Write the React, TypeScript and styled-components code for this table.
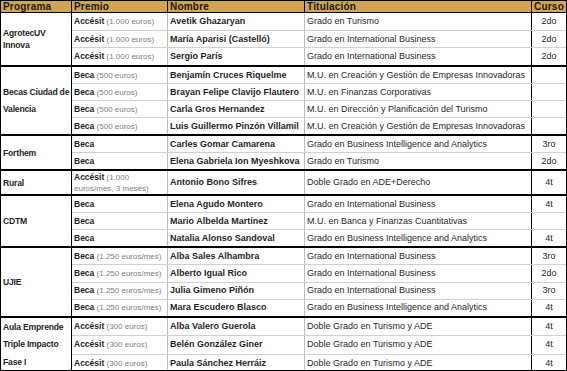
import React from 'react';
import styled, { createGlobalStyle } from 'styled-components';

const GlobalStyle = createGlobalStyle`
  html, body {
    margin: 0;
    padding: 0;
    background: #ffffff;
  }
  body {
    font-family: 'Liberation Sans', Arial, sans-serif;
    color: #1f1f1f;
  }
`;

const Table = styled.div`
  width: 567px;
  height: 371px;
  box-sizing: border-box;
  border: 1px solid #000;
  display: flex;
  flex-direction: column;
  overflow: hidden;
`;

const HeaderRow = styled.div`
  display: grid;
  grid-template-columns: 71px 96px 137px 227px 1fr;
  height: 12px;
  flex: none;
  background: #d3a352;
  border-bottom: 1px solid #000;
  box-sizing: border-box;
`;

const HeaderCell = styled.div<{ $center?: boolean; $last?: boolean }>`
  display: flex;
  align-items: center;
  justify-content: ${({ $center }) => ($center ? 'center' : 'flex-start')};
  padding: 0 2px;
  border-right: ${({ $last }) => ($last ? 'none' : '1px solid #000')};
  font-size: 10px;
  font-weight: 700;
  letter-spacing: 0.2px;
  color: #1a1a1a;
  line-height: 1;
  white-space: nowrap;
`;

const Group = styled.div<{ $h: number }>`
  display: flex;
  height: ${({ $h }) => $h}px;
  flex: none;
  box-sizing: border-box;
  border-bottom: 2px solid #000;

  &:last-child {
    border-bottom: none;
  }
`;

const ProgramCell = styled.div<{ $lh: number }>`
  width: 71px;
  flex: none;
  box-sizing: border-box;
  border-right: 1px solid #000;
  display: flex;
  flex-direction: column;
  justify-content: center;
  padding: 0 2px;
  overflow: hidden;
  font-size: 8.6px;
  font-weight: 700;
  letter-spacing: -0.2px;
  line-height: ${({ $lh }) => $lh}px;
  color: #1f1f1f;
  white-space: nowrap;
`;

const Rows = styled.div`
  flex: 1;
  display: flex;
  flex-direction: column;
`;

const Row = styled.div`
  flex: 1;
  min-height: 0;
  display: grid;
  grid-template-columns: 96px 137px 227px 1fr;
  border-bottom: 1px solid #d0d0d0;

  &:last-child {
    border-bottom: none;
  }
`;

const Cell = styled.div<{ $center?: boolean; $bold?: boolean; $line?: 'grey' | 'black' | 'none' }>`
  display: flex;
  align-items: center;
  justify-content: ${({ $center }) => ($center ? 'center' : 'flex-start')};
  padding: 0 2px;
  min-width: 0;
  overflow: hidden;
  font-size: 9px;
  font-weight: ${({ $bold }) => ($bold ? 700 : 400)};
  line-height: 11px;
  white-space: nowrap;
  border-right: ${({ $line }) =>
    $line === 'black' ? '1px solid #000' : $line === 'none' ? 'none' : '1px solid #bdbdbd'};
`;

const PrizeText = styled.div`
  display: flex;
  flex-direction: column;
`;

const PrizeKind = styled.span`
  font-size: 8.5px;
  font-weight: 700;
  color: #1f1f1f;
`;

const PrizeDetail = styled.span`
  font-size: 8px;
  color: #808080;
`;

interface Entry {
  premio: string;
  detalle?: string;
  detalle2?: string;
  nombre: string;
  titulacion: string;
  curso?: string;
}

interface Programa {
  lineas: string[];
  h: number;
  lh: number;
  rows: Entry[];
}

const programas: Programa[] = [
  {
    lineas: ['AgrotecUV', 'Innova'],
    h: 54,
    lh: 12,
    rows: [
      { premio: 'Accésit', detalle: '(1.000 euros)', nombre: 'Avetik Ghazaryan', titulacion: 'Grado en Turismo', curso: '2do' },
      { premio: 'Accésit', detalle: '(1.000 euros)', nombre: 'María Aparisi (Castelló)', titulacion: 'Grado en International Business', curso: '2do' },
      { premio: 'Accésit', detalle: '(1.000 euros)', nombre: 'Sergio París', titulacion: 'Grado en International Business', curso: '2do' },
    ],
  },
  {
    lineas: ['Becas Ciudad de', 'Valencia'],
    h: 69,
    lh: 17,
    rows: [
      { premio: 'Beca', detalle: '(500 euros)', nombre: 'Benjamín Cruces Riquelme', titulacion: 'M.U. en Creación y Gestión de Empresas Innovadoras' },
      { premio: 'Beca', detalle: '(500 euros)', nombre: 'Brayan Felipe Clavijo Flautero', titulacion: 'M.U. en Finanzas Corporativas' },
      { premio: 'Beca', detalle: '(500 euros)', nombre: 'Carla Gros Hernandez', titulacion: 'M.U. en Dirección y Planificación del Turismo' },
      { premio: 'Beca', detalle: '(500 euros)', nombre: 'Luis Guillermo Pinzón Villamil', titulacion: 'M.U. en Creación y Gestión de Empresas Innovadoras' },
    ],
  },
  {
    lineas: ['Forthem'],
    h: 35,
    lh: 12,
    rows: [
      { premio: 'Beca', nombre: 'Carles Gomar Camarena', titulacion: 'Grado en Business Intelligence and Analytics', curso: '3ro' },
      { premio: 'Beca', nombre: 'Elena Gabriela Ion Myeshkova', titulacion: 'Grado en Turismo', curso: '2do' },
    ],
  },
  {
    lineas: ['Rural'],
    h: 25,
    lh: 12,
    rows: [
      { premio: 'Accésit', detalle: '(1.000', detalle2: 'euros/mes, 3 meses)', nombre: 'Antonio Bono Sifres', titulacion: 'Doble Grado en ADE+Derecho', curso: '4t' },
    ],
  },
  {
    lineas: ['CDTM'],
    h: 52,
    lh: 12,
    rows: [
      { premio: 'Beca', nombre: 'Elena Agudo Montero', titulacion: 'Grado en International Business', curso: '4t' },
      { premio: 'Beca', nombre: 'Mario Albelda Martínez', titulacion: 'M.U. en Banca y Finanzas Cuantitativas' },
      { premio: 'Beca', nombre: 'Natalia Alonso Sandoval', titulacion: 'Grado en Business Intelligence and Analytics', curso: '4t' },
    ],
  },
  {
    lineas: ['UJIE'],
    h: 70,
    lh: 12,
    rows: [
      { premio: 'Beca', detalle: '(1.250 euros/mes)', nombre: 'Alba Sales Alhambra', titulacion: 'Grado en International Business', curso: '3ro' },
      { premio: 'Beca', detalle: '(1.250 euros/mes)', nombre: 'Alberto Igual Rico', titulacion: 'Grado en International Business', curso: '2do' },
      { premio: 'Beca', detalle: '(1.250 euros/mes)', nombre: 'Julia Gimeno Piñón', titulacion: 'Grado en International Business', curso: '3ro' },
      { premio: 'Beca', detalle: '(1.250 euros/mes)', nombre: 'Mara Escudero Blasco', titulacion: 'Grado en Business Intelligence and Analytics', curso: '4t' },
    ],
  },
  {
    lineas: ['Aula Emprende', 'Triple Impacto', 'Fase I'],
    h: 54,
    lh: 17.5,
    rows: [
      { premio: 'Accésit', detalle: '(300 euros)', nombre: 'Alba Valero Guerola', titulacion: 'Doble Grado en Turismo y ADE', curso: '4t' },
      { premio: 'Accésit', detalle: '(300 euros)', nombre: 'Belén González Giner', titulacion: 'Doble Grado en Turismo y ADE', curso: '4t' },
      { premio: 'Accésit', detalle: '(300 euros)', nombre: 'Paula Sánchez Herráiz', titulacion: 'Doble Grado en Turismo y ADE', curso: '4t' },
    ],
  },
];

const App: React.FC = () => (
  <>
    <GlobalStyle />
    <Table>
      <HeaderRow>
        <HeaderCell>Programa</HeaderCell>
        <HeaderCell>Premio</HeaderCell>
        <HeaderCell>Nombre</HeaderCell>
        <HeaderCell>Titulación</HeaderCell>
        <HeaderCell $center $last>Curso</HeaderCell>
      </HeaderRow>
      {programas.map(p => (
        <Group key={p.lineas.join(' ')} $h={p.h}>
          <ProgramCell $lh={p.lh}>
            {p.lineas.map(l => (
              <div key={l}>{l}</div>
            ))}
          </ProgramCell>
          <Rows>
            {p.rows.map(r => (
              <Row key={r.nombre}>
                <Cell>
                  <PrizeText>
                    <span>
                      <PrizeKind>{r.premio}</PrizeKind>
                      {r.detalle && <PrizeDetail> {r.detalle}</PrizeDetail>}
                    </span>
                    {r.detalle2 && <PrizeDetail>{r.detalle2}</PrizeDetail>}
                  </PrizeText>
                </Cell>
                <Cell $bold>{r.nombre}</Cell>
                <Cell $line="black">{r.titulacion}</Cell>
                <Cell $center $line="none">{r.curso}</Cell>
              </Row>
            ))}
          </Rows>
        </Group>
      ))}
    </Table>
  </>
);

export default App;
